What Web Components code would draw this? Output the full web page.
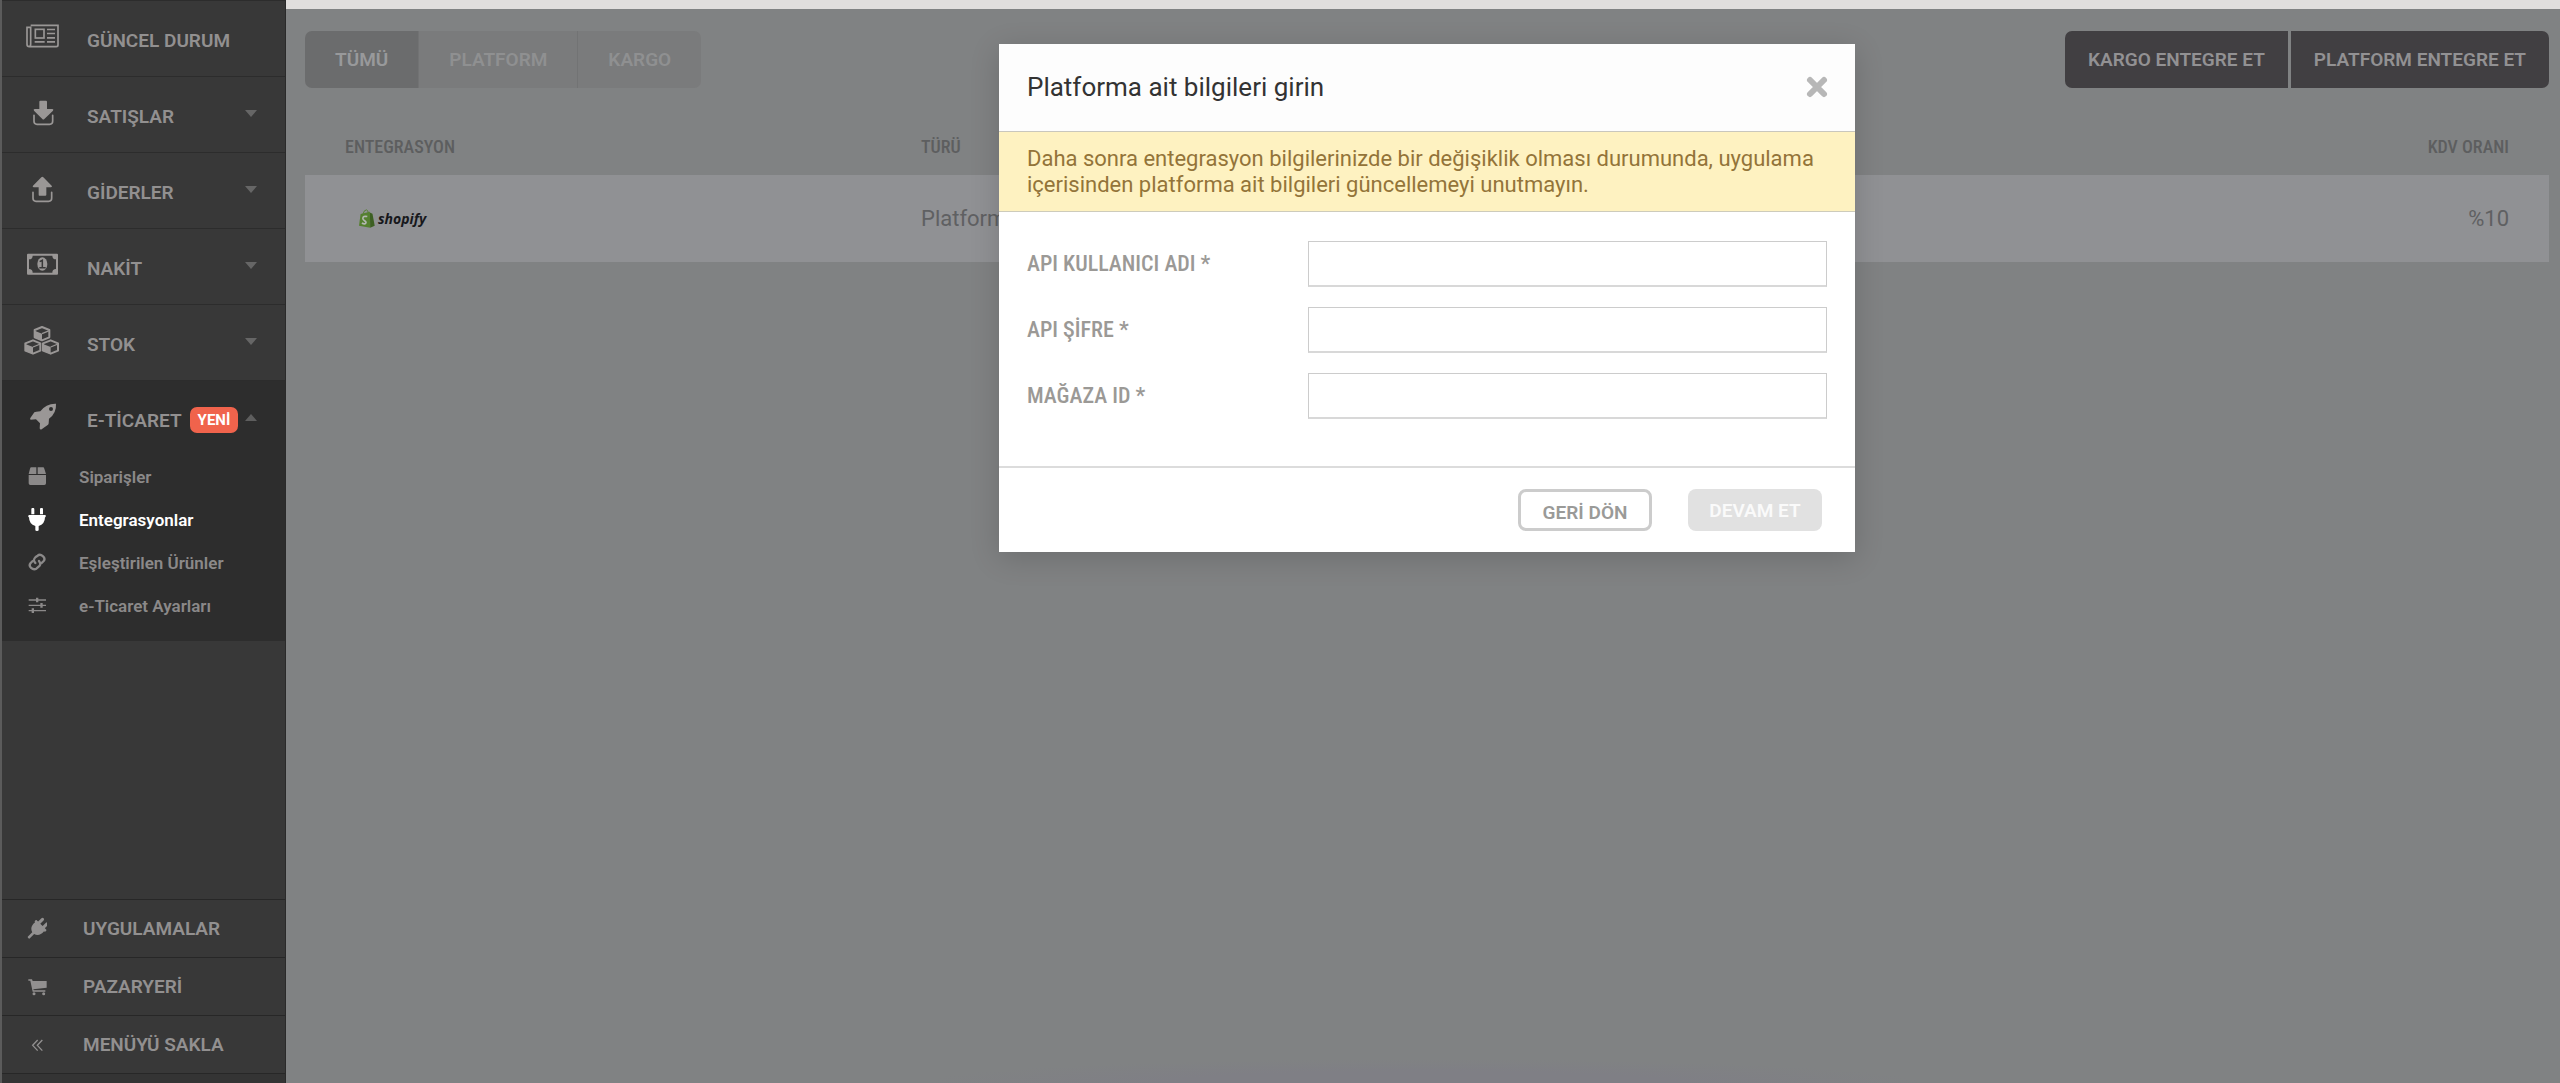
<!DOCTYPE html>
<html lang="tr">
<head>
<meta charset="utf-8">
<title>Entegrasyonlar</title>
<style>
  html, body { margin: 0; height: 100%; }
  body { font-family: Roboto, "Liberation Sans", sans-serif; font-size: 19px; background: #808283; color: #929090; }
</style>
</head>
<body>
<app-shell>
  <side-bar slot="side">
    <nav-item icon="news" plain>GÜNCEL DURUM</nav-item>
    <nav-item icon="download">SATIŞLAR</nav-item>
    <nav-item icon="upload">GİDERLER</nav-item>
    <nav-item icon="money">NAKİT</nav-item>
    <nav-item icon="cubes">STOK</nav-item>
    <nav-item icon="rocket" open badge="YENİ">E-TİCARET
      <sub-item slot="children" icon="box">Siparişler</sub-item>
      <sub-item slot="children" icon="plug" current>Entegrasyonlar</sub-item>
      <sub-item slot="children" icon="link">Eşleştirilen Ürünler</sub-item>
      <sub-item slot="children" icon="sliders">e-Ticaret Ayarları</sub-item>
    </nav-item>
    <foot-item slot="foot" icon="plugin">UYGULAMALAR</foot-item>
    <foot-item slot="foot" icon="cart">PAZARYERİ</foot-item>
    <foot-item slot="foot" icon="collapse">MENÜYÜ SAKLA</foot-item>
  </side-bar>
  <integration-page></integration-page>
  <modal-dialog slot="overlay" heading="Platforma ait bilgileri girin">
    <span slot="notice">Daha sonra entegrasyon bilgilerinizde bir değişiklik olması durumunda, uygulama içerisinden platforma ait bilgileri güncellemeyi unutmayın.</span>
    <form-field label="API KULLANICI ADI *"></form-field>
    <form-field label="API ŞİFRE *"></form-field>
    <form-field label="MAĞAZA ID *"></form-field>
  </modal-dialog>
</app-shell>

<script>
const icons = {
  news: ['72 64 108 90', '<g fill="none" stroke="currentColor" stroke-width="5"><path d="M92 77H174V136Q174 141 169 141H88Q81 141 81 134V83H92V134Q92 141 86 141"/><rect x="106" y="89" width="26" height="26"/></g><path d="M141 87h24v5h-24zM141 99h24v5h-24zM141 112h24v5h-24zM104 124h30v5h-30zM141 124h24v5h-24z" fill="currentColor"/>'],
  download: ['72 292 108 90', '<path fill="currentColor" d="M121 303h17q3 0 3 3v22h16q5 1 2 5l-26 25q-3 3-6 0l-25-25q-3-4 2-5h14v-22q0-3 3-3z"/><path fill="none" stroke="currentColor" stroke-width="5" stroke-linecap="round" d="M102 347v18q0 9 9 9h38q9 0 9-9v-18"/>'],
  upload: ['72 520 108 90', '<path fill="currentColor" d="M119 588h17q3 0 3-3v-22h14q5-1 2-5l-25-25q-3-3-6 0l-25 25q-3 4 2 5h15v22q0 3 2 3z"/><path fill="none" stroke="currentColor" stroke-width="5" stroke-linecap="round" d="M99 578v18q0 9 9 9h38q9 0 9-9v-18"/>'],
  money: ['72 58 108 90', '<path fill="currentColor" fill-rule="evenodd" d="M84 72h87q3 0 3 3v57q0 3-3 3h-87q-3 0-3-3v-57q0-3 3-3zM98 78q0 11-11 11v29q11 0 11 11h59q0-11 11-11v-29q-11 0-11-11z"/><ellipse cx="127" cy="103" rx="15" ry="20" fill="currentColor"/><path fill="none" stroke="#383838" stroke-width="4.500" d="M119 96l8-4v20M118 114h19"/>'],
  cubes: ['72 286 108 90', '<g fill="none" stroke="currentColor" stroke-width="6" stroke-linejoin="round"><path d="M126 292l22 9v22l-22 9-22-9v-22zM99 332l22 9v22l-22 9-23-9v-22zM152 332l22 9v22l-22 9-23-9v-22z"/></g><path fill="currentColor" d="M104 303l22 9v21l-22-9zM76 343l23 9v21l-23-9zM129 343l23 9v21l-23-9z"/><path fill="none" stroke="currentColor" stroke-width="4" d="M126 312l22-9M99 352l22-9M152 352l22-9"/>'],
  rocket: ['72 514 108 90', '<path fill="currentColor" fill-rule="evenodd" d="M168 522Q170 550 147 567L146 581Q146 584 143 586L125 599Q120 601 119 596L120 581L108 569L92 570Q89 569 91 565L103 548Q105 546 109 546L121 545Q138 521 168 522zM153 532a6 6 0 1 0 0 12a6 6 0 1 0 0-12z"/>'],
  box: ['81 78 60 72', '<path fill="currentColor" d="M94 85h15v20H86l4-16q1-4 4-4zM113 85h16q3 0 4 4l5 16h-25zM86 108h52v25q0 5-5 5H91q-5 0-5-5z"/>'],
  plug: ['81 207 60 72', '<path fill="currentColor" d="M94 211a4 4 0 0 1 9 0v15h-9zM120 211a4 4 0 0 1 9 0v15h-9zM87 228h49q3 3 0 7h-1q0 20-19 26v12q0 3-5 3t-5-3v-12q-19-6-19-26h-1q-3-4 1-7z"/>'],
  link: ['81 335 60 72', '<g fill="none" stroke="currentColor" stroke-width="7" stroke-linecap="round" stroke-linejoin="round"><path d="M106 371C98 362 103 357 107 353L113 349C122 341 139 355 131 365L125 371"/><path d="M117 365C124 374 120 379 116 382L109 388C99 394 83 382 92 371L98 365"/></g>'],
  sliders: ['81 463 60 72', '<path fill="currentColor" d="M86 479h52v4H86zM86 495h52v4H86zM86 511h52v4H86zM108 474h7v14h-7zM121 490h7v14h-7zM95 506h7v14h-7z"/>'],
  plugin: ['81 108 60 72', '<g transform="rotate(45 113 143)"><path fill="currentColor" d="M99 113a4 4 0 0 1 9 0v15h-9zM118 113a4 4 0 0 1 9 0v15h-9zM92 127h42q4 3 0 8h-2q2 22-15 27v18q0 3-4 3t-4-3v-18q-17-5-15-27h-2q-4-5 0-8z"/></g>'],
  cart: ['81 282 60 72', '<path fill="currentColor" d="M85 295h11l2 5h42v20l-40 5 1 3h35v4H98l-7-33h-6z"/><circle cx="102" cy="338" r="4.500" fill="currentColor"/><circle cx="131" cy="338" r="4.500" fill="currentColor"/>'],
  collapse: ['81 456 60 72', '<path fill="none" stroke="currentColor" stroke-width="4" d="M113 477l-15 16 15 16M127 477l-15 16 15 16"/>'],
  close: ['0 0 24 24', '<path fill="none" stroke="currentColor" stroke-width="6" stroke-linecap="round" d="M5 5l14 14M19 5L5 19"/>'],
  bag: ['0 0 50 58', '<path fill="#55802f" d="M5 15L34 8L35 58L0 52z"/><path fill="#3c5f22" d="M34 10l8 4 7 38-14 6z"/><path fill="none" stroke="#55802f" stroke-width="3" d="M12 16Q16 1 24 2Q29 4 29 13"/><path fill="none" stroke="#b4b8b2" stroke-width="5" d="M26 23Q12 20 12 29C12 36 23 36 22 42Q19 49 9 43"/>']
};
const svg = n => `<svg viewBox="${icons[n][0]}" aria-hidden="true">${icons[n][1]}</svg>`;

class Base extends HTMLElement {
  connectedCallback() {
    if (this.shadowRoot) return;
    this.attachShadow({ mode: 'open' }).innerHTML = this.render();
  }
}

customElements.define('app-shell', class extends Base {
  render() { return `<style>
    :host { display: flex; min-height: 100vh; position: relative; --side: 286px; }
    main { flex: 1; min-width: 0; display: flex; }
  </style><slot name="side"></slot><main><slot></slot></main><slot name="overlay"></slot>`; }
});

customElements.define('side-bar', class extends Base {
  render() { return `<style>
    :host { display: flex; flex-direction: column; box-sizing: border-box; width: var(--side); flex: none;
      background: #383838; border-left: 2px solid #5b5b5b; border-right: 1px solid #2a2a2a; }
    nav { flex: 1; border-top: 1px solid #2c2c2c; }
    footer { border-top: 1px solid #272727; padding-bottom: 9px; background: #343434; }
  </style><nav><slot></slot></nav><footer><slot name="foot"></slot></footer>`; }
});

customElements.define('nav-item', class extends Base {
  render() {
    const open = this.hasAttribute('open');
    return `<style>
    :host { display: block; }
    :host([open]) { background: #2d2d2d; padding-bottom: 12px; }
    a { display: flex; align-items: center; box-sizing: border-box; height: 76px; padding: 3px 28px 0 22px;
      border-bottom: 1px solid #2c2c2c; color: inherit; text-decoration: none; font-weight: 600; }
    :host([open]) a { border-color: #2d2d2d; }
    svg { width: 36px; height: 30px; margin: 0 27px 9px 0; color: #9a9796; flex: none; }
    .badge { margin-left: 8px; padding: 0 8px; border-radius: 7px; background: #f0634c; color: #fff;
      font-size: 15px; font-weight: 700; line-height: 26px; }
    i { margin-left: auto; margin-bottom: 6px; border: 6px solid transparent; border-bottom: 0; border-top: 7px solid #666; }
    :host([open]) i { border-top: 0; border-bottom: 7px solid #5e5e5e; }
    .text { white-space: nowrap; }
  </style><a href="#">${svg(this.getAttribute('icon'))}<span class="text"><slot></slot></span>
    ${this.hasAttribute('badge') ? `<span class="badge">${this.getAttribute('badge')}</span>` : ''}
    ${this.hasAttribute('plain') ? '' : '<i></i>'}</a>${open ? '<slot name="children"></slot>' : ''}`;
  }
});

customElements.define('sub-item', class extends Base {
  render() { return `<style>
    :host { display: block; }
    a { display: flex; align-items: center; box-sizing: border-box; height: 43px; padding: 0 0 3px 25px; gap: 32px; color: #8b8989;
      text-decoration: none; font-size: 17px; font-weight: 600; }
    :host([current]) a { color: #fff; }
    svg { width: 20px; height: 24px; }
  </style><a href="#">${svg(this.getAttribute('icon'))}<slot></slot></a>`; }
});

customElements.define('foot-item', class extends Base {
  render() { return `<style>
    :host { display: block; background: #383838; }
    a { display: flex; align-items: center; box-sizing: border-box; height: 58px; padding-left: 25px; gap: 36px;
      border-bottom: 1px solid #272727; color: inherit; text-decoration: none; font-weight: 600; }
    svg { width: 20px; height: 24px; }
  </style><a href="#">${svg(this.getAttribute('icon'))}<slot></slot></a>`; }
});

customElements.define('integration-page', class extends Base {
  render() { return `<style>
    :host { display: block; flex: 1; border-top: 9px solid #e0dedd; padding: 22px 11px 0 19px;
      background: radial-gradient(ellipse 500px 24px at 50% 100%, #7f7f85 50%, transparent); }
    .bar { display: flex; justify-content: space-between; }
    .group { display: flex; border-radius: 7px; overflow: hidden; }
    button { border: 0; height: 57px; font: 600 19px Roboto, sans-serif; color: #969697; }
    .tabs button { padding: 0 30px; background: #7a7b7c; color: #8f9091; border-right: 1px solid #727374; }
    .tabs button:last-child { border: 0; }
    .tabs button[aria-selected=true] { background: #6b6c6d; color: #98999b; }
    .actions { gap: 3px; }
    .actions button { padding: 0 23px; background: #413f42; color: #929193; }
    table { width: 100%; border-collapse: collapse; margin-top: 30px; table-layout: fixed; }
    th { height: 57px; padding: 0; font: 500 18px "Roboto Condensed", Roboto, sans-serif; color: #5d5e5f; text-align: left; }
    td { height: 87px; padding: 0; background: #909194; font-size: 22px; color: #5f6062; }
    th:first-child, td:first-child { box-sizing: border-box; width: 616px; padding-left: 40px; }
    th:last-child, td:last-child { text-align: right; padding-right: 40px; }
    .logo { display: flex; align-items: center; gap: 3px; padding-left: 14px;
      font: italic 700 14px "Open Sans", sans-serif; color: #17181c; }
    .logo svg { width: 16px; height: 19px; }
  </style>
  <div class="bar">
    <div class="group tabs" role="tablist"><button role="tab" aria-selected="true">TÜMÜ</button><button role="tab">PLATFORM</button><button role="tab">KARGO</button></div>
    <div class="group actions"><button>KARGO ENTEGRE ET</button><button>PLATFORM ENTEGRE ET</button></div>
  </div>
  <table>
    <thead><tr><th>ENTEGRASYON</th><th>TÜRÜ</th><th>KDV ORANI</th></tr></thead>
    <tbody><tr><td><div class="logo">${svg('bag')}<span>shopify</span></div></td><td>Platform</td><td>%10</td></tr></tbody>
  </table>`; }
});

customElements.define('modal-dialog', class extends Base {
  render() { return `<style>
    :host { position: absolute; inset: 0; display: flex; justify-content: center; align-items: flex-start;
      padding: 44px 0 0 calc(var(--side) + 8px); }
    section { width: 856px; background: #fff; box-shadow: 0 6px 28px rgba(0,0,0,.16); }
    header { display: flex; align-items: center; justify-content: space-between; box-sizing: border-box; height: 88px;
      padding: 0 26px 1px 28px; background: #fdfdfd; border-bottom: 1px solid #c9c7bd; }
    h2 { margin: 0; font-size: 26px; font-weight: 400; color: #333; }
    header button { border: 0; padding: 0; background: none; color: #b7b7b7; display: flex; }
    svg { width: 24px; height: 24px; }
    p { margin: 0; padding: 14px 28px 13px; background: #fef2c1; border-bottom: 1px solid #cdcbbb; color: #937439;
      font-size: 22px; line-height: 26px; }
    form { display: flex; flex-direction: column; gap: 20px; padding: 29px 28px 47px; }
    footer { display: flex; justify-content: flex-end; gap: 36px; border-top: 2px solid #dcdcdc; padding: 21px 33px 21px 0; }
    footer button { box-sizing: border-box; min-width: 134px; height: 42px; border-radius: 8px; padding: 0;
      font: 600 19px Roboto, sans-serif; }
    .back { border: 3px solid #ccc; background: #fff; color: #9a9a98; padding-top: 5px; }
    .next { border: 0; background: #e1e1e1; color: #fafafa; }
  </style>
  <section role="dialog" aria-labelledby="t">
    <header><h2 id="t">${this.getAttribute('heading')}</h2><button aria-label="Kapat">${svg('close')}</button></header>
    <p><slot name="notice"></slot></p>
    <form><slot></slot></form>
    <footer><button class="back">GERİ DÖN</button><button class="next">DEVAM ET</button></footer>
  </section>`; }
});

customElements.define('form-field', class extends Base {
  render() { return `<style>
    :host { display: flex; align-items: center; }
    label { flex: 1; padding-bottom: 2px; font: 500 22px "Roboto Condensed", Roboto, sans-serif; color: #9b9996; }
    input { box-sizing: border-box; width: 519px; height: 46px; border: 1px solid #ccc; border-bottom-width: 2px;
      border-bottom-color: #d8d8d8; padding: 0 12px; font: 21px Roboto, sans-serif; background: #fff; outline: 0; }
  </style><label for="f">${this.getAttribute('label')}</label><input id="f" type="text">`; }
});
</script>
</body>
</html>
